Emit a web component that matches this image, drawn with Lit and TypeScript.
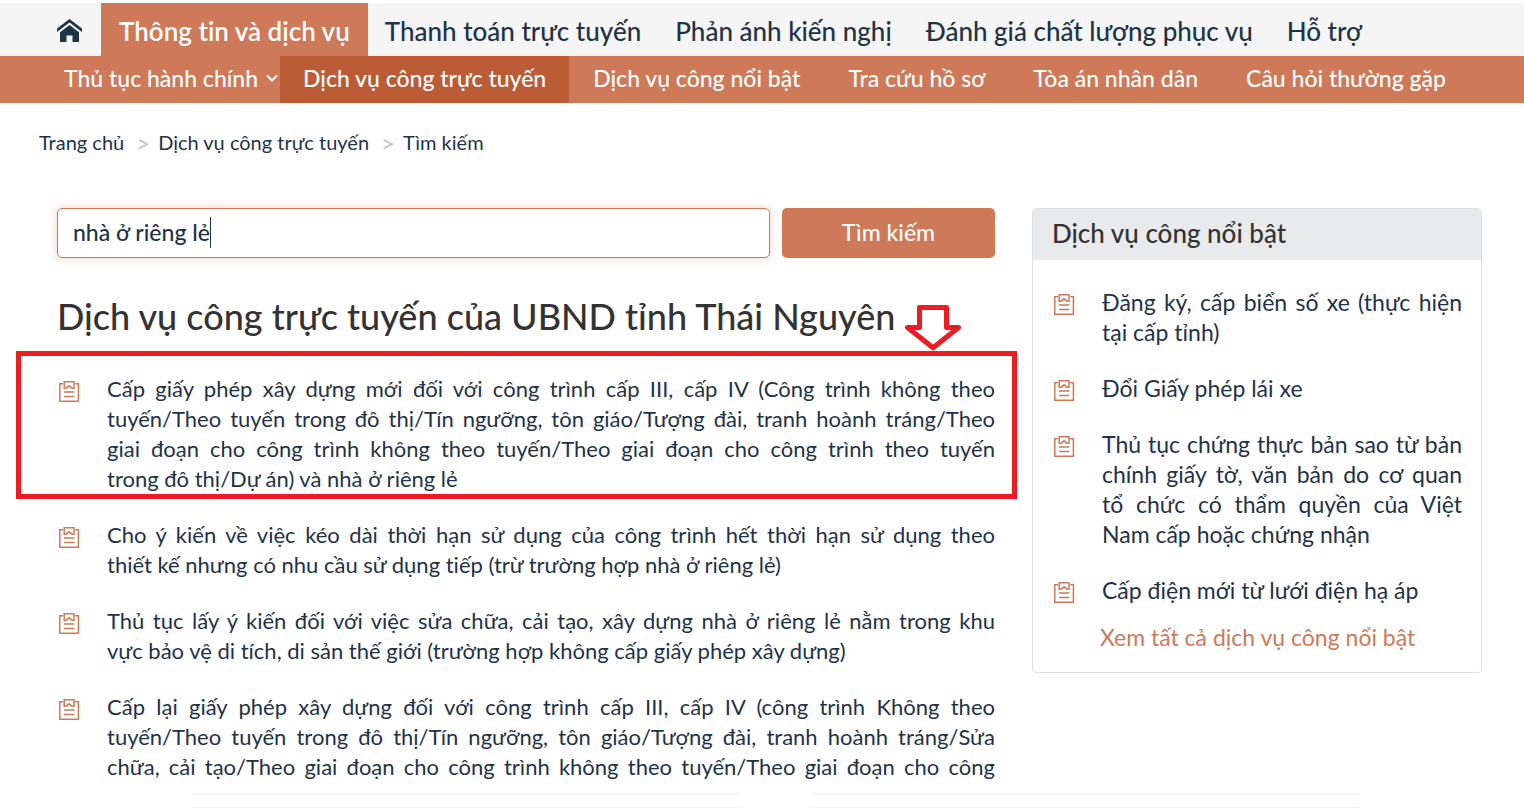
import { LitElement, html, css, svg } from "lit";
import { customElement, state } from "lit/decorators.js";
import { classMap } from "lit/directives/class-map.js";

const MAIN_MENU = [
  "Thông tin và dịch vụ",
  "Thanh toán trực tuyến",
  "Phản ánh kiến nghị",
  "Đánh giá chất lượng phục vụ",
  "Hỗ trợ",
];

const SUB_MENU = [
  "Thủ tục hành chính",
  "Dịch vụ công trực tuyến",
  "Dịch vụ công nổi bật",
  "Tra cứu hồ sơ",
  "Tòa án nhân dân",
  "Câu hỏi thường gặp",
];

const RESULTS = [
  "Cấp giấy phép xây dựng mới đối với công trình cấp III, cấp IV (Công trình không theo tuyến/Theo tuyến trong đô thị/Tín ngưỡng, tôn giáo/Tượng đài, tranh hoành tráng/Theo giai đoạn cho công trình không theo tuyến/Theo giai đoạn cho công trình theo tuyến trong\u00a0đô\u00a0thị/Dự án) và nhà ở riêng lẻ",
  "Cho ý kiến về việc kéo dài thời hạn sử dụng của công trình hết thời hạn sử dụng theo thiết\u00a0kế nhưng có nhu cầu sử dụng tiếp (trừ trường hợp nhà ở riêng lẻ)",
  "Thủ tục lấy ý kiến đối với việc sửa chữa, cải tạo, xây dựng nhà ở riêng lẻ nằm trong khu vực\u00a0bảo vệ di tích, di sản thế giới (trường hợp không cấp giấy phép xây dựng)",
  "Cấp lại giấy phép xây dựng đối với công trình cấp III, cấp IV (công trình Không theo tuyến/Theo tuyến trong đô thị/Tín ngưỡng, tôn giáo/Tượng đài, tranh hoành tráng/Sửa chữa, cải tạo/Theo giai đoạn cho công trình không theo tuyến/Theo giai đoạn cho công",
];

const FEATURED = [
  "Đăng ký, cấp biển số xe (thực hiện tại cấp tỉnh)",
  "Đổi Giấy phép lái xe",
  "Thủ tục chứng thực bản sao từ bản chính giấy tờ, văn bản do cơ quan tổ chức có thẩm quyền của Việt Nam cấp hoặc chứng nhận",
  "Cấp điện mới từ lưới điện hạ áp",
];

@customElement("service-item")
export class ServiceItem extends LitElement {
  static properties = { label: {}, cut: { type: Boolean } };
  declare label: string;
  declare cut: boolean;

  static styles = css`
    :host {
      display: grid;
      grid-template-columns: 22px 1fr;
      column-gap: 28px;
      align-items: start;
    }
    .icon {
      width: 23px;
      height: 23px;
      margin-top: 6px;
    }
    .link {
      color: #1f3347;
      text-decoration: none;
      text-align: justify;
      line-height: 30px;
    }
    :host([cut]) .link {
      text-align-last: justify;
    }
  `;

  render() {
    return html`
      <svg class="icon" viewBox="0 0 23 23" fill="none" stroke="#ce7a58" stroke-width="1.5" aria-hidden="true">
        <path d="M6 3.8H2.8V21.2H21.4V3.8H18.2" />
        <path d="M7.2 1.8H17V8.2H15L12.1 5.8L9.2 8.2H7.2Z" />
        <path d="M7 12H17.4M7 16.4H17.4" />
      </svg>
      <a class="link" href="#">${this.label}</a>
    `;
  }
}

@customElement("app-root")
export class AppRoot extends LitElement {
  @state() private keyword = "nhà ở riêng lẻ";

  static styles = css`
    :host {
      display: flex;
      flex-direction: column;
      min-height: 100vh;
      box-sizing: border-box;
      padding-top: 3px;
      background: #fff;
      color: #1f3347;
      font-family: Lato, "Noto Sans", sans-serif;
      font-size: 23px;
      font-variant-ligatures: none;
    }
    * {
      box-sizing: border-box;
    }
    a {
      color: inherit;
      text-decoration: none;
    }
    .menu {
      display: flex;
      height: 53px;
      padding-left: 38px;
      background: #f5f5f5;
      font-size: 26px;
      font-weight: 500;
      white-space: nowrap;
    }
    .menu-item {
      display: flex;
      align-items: center;
      padding: 2px 17px 0;
    }
    .menu-item.start {
      padding: 2px 19px 0;
    }
    .menu-item.active {
      padding: 2px 18px 0;
      background: #ce7a58;
      color: #fff;
      font-weight: 600;
    }
    .home {
      width: 25px;
      height: 24px;
    }
    .submenu {
      display: flex;
      height: 47px;
      padding-left: 40px;
      background: #ce7a58;
      color: #fff;
      font-weight: 500;
      white-space: nowrap;
    }
    .submenu-item {
      display: flex;
      align-items: center;
      gap: 8px;
      padding: 0 24px 4px;
    }
    .submenu-item.parent {
      padding-right: 2px;
    }
    .submenu-item.active {
      padding: 0 23px 4px;
      background: #bc5c36;
    }
    .chevron {
      width: 12px;
      height: 8px;
    }
    .crumbs {
      display: flex;
      gap: 12px;
      padding: 28px 39px 0;
      font-size: 20px;
      line-height: 23px;
    }
    .crumb {
      display: flex;
      gap: 8px;
    }
    .sep {
      color: #c4c4c4;
      font-size: 24px;
    }
    .content {
      display: grid;
      grid-template-columns: 938fr 450fr;
      gap: 37px;
      align-items: start;
      padding: 54px 42px 10px 57px;
    }
    .search {
      display: grid;
      grid-template-columns: 713fr 213fr;
      gap: 12px;
    }
    .field {
      position: relative;
      display: flex;
    }
    .input {
      width: 100%;
      height: 50px;
      padding: 0 15px 2px;
      border: 1px solid #ce7a58;
      border-radius: 5px;
      outline: none;
      box-shadow: 0 0 10px rgba(206, 122, 88, 0.35);
      color: inherit;
      font: inherit;
      font-weight: 500;
    }
    .caret {
      position: absolute;
      top: 9px;
      left: 153px;
      width: 1px;
      height: 31px;
      background: #1f3347;
    }
    .submit {
      height: 50px;
      padding: 0 0 2px;
      border: 0;
      border-radius: 5px;
      background: #ce7a58;
      color: #fff;
      font: inherit;
      font-weight: 500;
    }
    .title {
      margin: 35px 0;
      color: #333;
      font-size: 36px;
      font-weight: 500;
      line-height: 46px;
    }
    .list {
      display: flex;
      flex-direction: column;
      gap: 26px;
      margin: 0;
      padding: 0;
      list-style: none;
    }
    .results {
      font-size: 22px;
    }
    .row {
      position: relative;
    }
    .mark {
      position: absolute;
      inset: -23px -22px -5px -41px;
      border: 5px solid #ed1c24;
      pointer-events: none;
    }
    .arrow {
      position: absolute;
      right: 50px;
      bottom: 100%;
      width: 58px;
      height: 46px;
      margin-bottom: 5px;
    }
    .card {
      border: 1px solid #dfe1e3;
      border-radius: 4px;
      overflow: hidden;
    }
    .card-title {
      margin: 0;
      padding: 0 19px 2px;
      background: #e9eaec;
      color: #333;
      font-size: 26px;
      font-weight: 500;
      line-height: 49px;
    }
    .card-body {
      padding: 27px 19px 20px;
    }
    .more {
      display: block;
      margin: 17px 0 0 48px;
      color: #ce7a58;
      line-height: 30px;
    }
    .panels {
      display: grid;
      grid-template-columns: 1fr 1fr;
      gap: 74px;
      margin-top: auto;
      padding: 0 165px 0 192px;
    }
    .panel {
      height: 15px;
      border-top: 2px solid #f4f4f4;
      border-bottom: 1px solid #f4f4f4;
    }
  `;

  private onInput(e: Event) {
    this.keyword = (e.target as HTMLInputElement).value;
  }

  render() {
    return html`
      <nav class="menu" aria-label="Menu chính">
        <a class="menu-item start" href="#" aria-label="Trang chủ">
          <svg class="home" viewBox="0 0 25 24" fill="#1f3347" aria-hidden="true">
            <path d="M12.5 0L25 9.6V13L12.5 3.4L0 13V9.6Z" />
            <path d="M12.5 6L22 13.2V23H15.5V16.5H9.5V23H3V13.2Z" />
          </svg>
        </a>
        ${MAIN_MENU.map(
          (text, i) => html`<a class=${classMap({ "menu-item": true, active: i === 0 })} href="#">${text}</a>`
        )}
      </nav>
      <nav class="submenu" aria-label="Menu phụ">
        ${SUB_MENU.map(
          (text, i) => html`<a
            class=${classMap({ "submenu-item": true, parent: i === 0, active: i === 1 })}
            href="#"
            >${text}${i === 0
              ? html`<svg class="chevron" viewBox="0 0 12 8" fill="none" stroke="#fff" stroke-width="2" aria-hidden="true">
                  ${svg`<path d="M1 1.5L6 6.5L11 1.5" />`}
                </svg>`
              : ""}</a
          >`
        )}
      </nav>
      <nav class="crumbs" aria-label="Breadcrumb">
        <a href="#">Trang chủ</a>
        <span class="crumb"><span class="sep">&gt;</span><a href="#">Dịch vụ công trực tuyến</a></span>
        <span class="crumb"><span class="sep">&gt;</span><a href="#">Tìm kiếm</a></span>
      </nav>
      <main class="content">
        <section>
          <form class="search" @submit=${(e: Event) => e.preventDefault()}>
            <label class="field">
              <input class="input" type="text" aria-label="Từ khóa" .value=${this.keyword} @input=${this.onInput} />
              <span class="caret"></span>
            </label>
            <button class="submit" type="submit">Tìm kiếm</button>
          </form>
          <h1 class="title">Dịch vụ công trực tuyến của UBND tỉnh Thái Nguyên</h1>
          <ul class="list results">
            ${RESULTS.map(
              (text, i) => html`<li class="row">
                <service-item .label=${text} ?cut=${i === RESULTS.length - 1}></service-item>
                ${i === 0
                  ? html`<div class="mark">
                      <svg class="arrow" viewBox="0 0 58 46" fill="#fff" stroke="#ed1c24" stroke-width="5" aria-hidden="true">
                        <path d="M15.5 2.5H42.5V22.5H54.5L29 42.8L3.5 22.5H15.5Z" stroke-linejoin="round" />
                      </svg>
                    </div>`
                  : ""}
              </li>`
            )}
          </ul>
        </section>
        <aside class="card">
          <h2 class="card-title">Dịch vụ công nổi bật</h2>
          <div class="card-body">
            <ul class="list">
              ${FEATURED.map((text) => html`<li><service-item .label=${text}></service-item></li>`)}
            </ul>
            <a class="more" href="#">Xem tất cả dịch vụ công nổi bật</a>
          </div>
        </aside>
      </main>
      <footer class="panels">
        <div class="panel"></div>
        <div class="panel"></div>
      </footer>
    `;
  }
}
